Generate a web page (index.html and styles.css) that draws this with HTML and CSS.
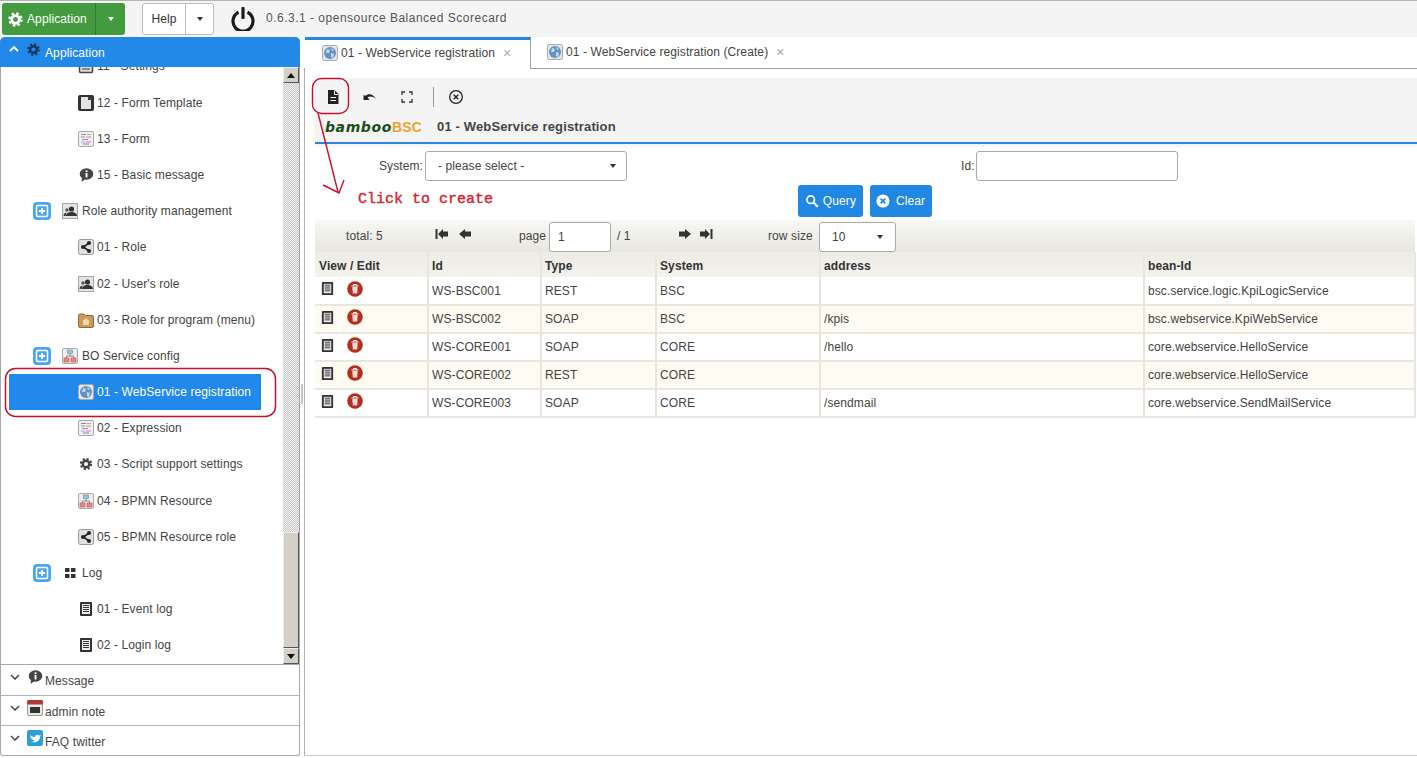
FILE: index.html
```html
<!DOCTYPE html>
<html lang="en">
<head>
<meta charset="utf-8">
<title>bambooBSC</title>
<link rel="stylesheet" href="styles.css">
</head>
<body>
<svg class="defs" width="0" height="0" aria-hidden="true">
  <symbol id="gear" viewBox="0 0 16 16"><circle cx="8" cy="8" r="4.1" fill="none" stroke="currentColor" stroke-width="3"/><circle cx="8" cy="8" r="6.4" fill="none" stroke="currentColor" stroke-width="2.6" stroke-dasharray="2.6 2.43"/></symbol>
  <symbol id="globe" viewBox="0 0 16 16"><rect x=".5" y=".5" width="15" height="15" rx="2" fill="#e6e6e6" stroke="#a9a9a9"/><circle cx="8" cy="8" r="6" fill="#5f93c9"/><path d="M5 4l3 1-1 3-3 0zM9 8l3 1-1 4-2-1zM9 3l3 2-2 1z" fill="#c9d9ea"/></symbol>
  <symbol id="share" viewBox="0 0 16 16"><rect x=".5" y=".5" width="15" height="15" rx="2" fill="#e0e0e0" stroke="#9a9a9a"/><path d="M11 4L5.5 8l5.5 4" fill="none" stroke="#222" stroke-width="1.6"/><circle cx="11" cy="4" r="2" fill="#222"/><circle cx="5" cy="8" r="2" fill="#222"/><circle cx="11" cy="12" r="2" fill="#222"/></symbol>
  <symbol id="users" viewBox="0 0 16 16"><rect x=".5" y=".5" width="15" height="15" fill="#e4e4e4" stroke="#a5a5a5"/><circle cx="9.5" cy="6" r="2.6" fill="#333"/><path d="M4 13c0-3 3-4 5.500-4S15 10 15 13zM1.500 13c0-2 1-3 3-3.500l-1 3.500z" fill="#333"/><circle cx="5" cy="7" r="1.700" fill="#555"/></symbol>
  <symbol id="folder" viewBox="0 0 16 16"><path d="M.5 3.500A1.500 1.500 0 0 1 2 2h4l1.500 1.500H14a1.500 1.500 0 0 1 1.500 1.500v9A1.500 1.500 0 0 1 14 15.500H2A1.500 1.500 0 0 1 .5 14z" fill="#c99a5b" stroke="#8f6a36"/><path d="M8 6l4 3.500h-1V13H5V9.500H4z" fill="#f0d9a8"/></symbol>
  <symbol id="tmpl" viewBox="0 0 16 16"><rect width="16" height="16" rx="2" fill="#333"/><path d="M3 2h7l3 3v9H3z" fill="#e4e4e4"/><path d="M10 2l3 3h-3z" fill="#333"/></symbol>
  <symbol id="form" viewBox="0 0 16 16"><rect x=".5" y=".5" width="15" height="15" rx="1.500" fill="#f3eef0" stroke="#a9a9a9"/><path d="M3 3.500h5" stroke="#6e8fc7"/><path d="M9 3.500h4" stroke="#d9a45c"/><path d="M3 6h4" stroke="#d77"/><path d="M8 6h5" stroke="#7b7"/><path d="M4 8.500h6" stroke="#b7c"/><path d="M3 11h4" stroke="#7bc"/><path d="M8 11h5" stroke="#d7a"/><path d="M5 13h6" stroke="#97c"/></symbol>
  <symbol id="msg" viewBox="0 0 16 16"><ellipse cx="8.500" cy="7" rx="6.800" ry="5.800" fill="#444"/><path d="M4 11l-.5 4 4-3z" fill="#444"/><rect x="7.600" y="6" width="1.900" height="4.500" fill="#fff"/><rect x="7.600" y="3.300" width="1.900" height="1.800" fill="#fff"/></symbol>
  <symbol id="tree" viewBox="0 0 16 16"><rect x=".5" y=".5" width="15" height="15" rx="1.500" fill="#eeeeee" stroke="#aaa"/><rect x="5.500" y="2" width="5" height="3.500" fill="#9bc0dc" stroke="#6a8da8" stroke-width=".6"/><path d="M8 5.500V8M4.500 10V8h7v2" fill="none" stroke="#888"/><rect x="2" y="10" width="5" height="4" fill="#e58a8a" stroke="#b55" stroke-width=".6"/><rect x="9" y="10" width="5" height="4" fill="#e58a8a" stroke="#b55" stroke-width=".6"/></symbol>
  <symbol id="list" viewBox="0 0 16 16"><rect x="2" y="1" width="12" height="14" rx="1" fill="#333"/><rect x="4" y="3" width="8" height="10" fill="#eee"/><path d="M5 4.500h6M5 6.500h6M5 8.500h6M5 10.500h6" stroke="#333"/></symbol>
  <symbol id="settings" viewBox="0 0 16 16"><rect x="1.500" y="1.500" width="13" height="13" rx="1" fill="#ddd" stroke="#444" stroke-width="1.500"/><path d="M4 5h8M4 8h8M4 11h8" stroke="#333"/></symbol>
  <symbol id="grid4" viewBox="0 0 16 16"><rect x="3" y="3" width="4.500" height="4" fill="#333"/><rect x="9" y="3" width="4.500" height="4" fill="#333"/><rect x="3" y="9" width="4.500" height="4" fill="#333"/><rect x="9" y="9" width="4.500" height="4" fill="#333"/></symbol>
  <symbol id="plus" viewBox="0 0 18 18"><rect width="18" height="18" rx="4" fill="#4ba6ee"/><rect x="3.500" y="3.500" width="11" height="11" rx="1.500" fill="none" stroke="#fff" stroke-width="1.500"/><path d="M9 6v6M6 9h6" stroke="#fff" stroke-width="2"/></symbol>
  <symbol id="trash" viewBox="0 0 16 16"><circle cx="8" cy="8" r="7.800" fill="#b5301c"/><path d="M4.500 5h7M6.500 5V3.500h3V5" fill="none" stroke="#fff"/><path d="M5.300 6h5.400l-.5 6.500H5.800z" fill="#f4d9d3"/></symbol>
</svg>

<div class="app">
  <header class="top">
    <div class="btn-split green">
      <span class="btn-main"><svg class="ico-15"><use href="#gear"/></svg>Application</span>
      <span class="btn-drop"><i class="caret white"></i></span>
    </div>
    <div class="btn-split plain">
      <span class="btn-main">Help</span>
      <span class="btn-drop"><i class="caret"></i></span>
    </div>
    <svg class="power" viewBox="0 0 24 24"><path d="M7.500 5.200a10 10 0 1 0 9 0" fill="none" stroke="#1a1a1a" stroke-width="3.200"/><rect x="10.400" y="0" width="3.200" height="12" rx="1" fill="#1a1a1a"/></svg>
    <span class="version">0.6.3.1 - opensource Balanced Scorecard</span>
  </header>

  <div class="body-row">
    <aside class="side">
      <div class="side-head">
        <svg class="chev" viewBox="0 0 10 6"><path d="M1 5l4-4 4 4" fill="none" stroke="#fff" stroke-width="1.800"/></svg>
        <svg class="head-ico navy"><use href="#gear"/></svg>
        <span class="head-label">Application</span>
      </div>
      <div class="tree-wrap">
        <ul class="tree">
          <li class="leaf"><svg class="ico"><use href="#settings"/></svg>11 - Settings</li>
          <li class="leaf"><svg class="ico"><use href="#tmpl"/></svg>12 - Form Template</li>
          <li class="leaf"><svg class="ico"><use href="#form"/></svg>13 - Form</li>
          <li class="leaf"><svg class="ico"><use href="#msg"/></svg>15 - Basic message</li>
          <li class="group"><svg class="plus"><use href="#plus"/></svg><svg class="ico"><use href="#users"/></svg>Role authority management</li>
          <li class="leaf"><svg class="ico"><use href="#share"/></svg>01 - Role</li>
          <li class="leaf"><svg class="ico"><use href="#users"/></svg>02 - User's role</li>
          <li class="leaf"><svg class="ico"><use href="#folder"/></svg>03 - Role for program (menu)</li>
          <li class="group"><svg class="plus"><use href="#plus"/></svg><svg class="ico"><use href="#tree"/></svg>BO Service config</li>
          <li class="leaf selected"><svg class="ico"><use href="#globe"/></svg>01 - WebService registration</li>
          <li class="leaf"><svg class="ico"><use href="#form"/></svg>02 - Expression</li>
          <li class="leaf"><svg class="ico dark"><use href="#gear"/></svg>03 - Script support settings</li>
          <li class="leaf"><svg class="ico"><use href="#tree"/></svg>04 - BPMN Resource</li>
          <li class="leaf"><svg class="ico"><use href="#share"/></svg>05 - BPMN Resource role</li>
          <li class="group"><svg class="plus"><use href="#plus"/></svg><svg class="ico"><use href="#grid4"/></svg>Log</li>
          <li class="leaf"><svg class="ico"><use href="#list"/></svg>01 - Event log</li>
          <li class="leaf"><svg class="ico"><use href="#list"/></svg>02 - Login log</li>
        </ul>
        <div class="vscroll">
          <span class="sb-btn"><i class="tri-up"></i></span>
          <span class="sb-track"></span>
          <span class="sb-thumb"></span>
          <span class="sb-btn"><i class="tri-down"></i></span>
        </div>
      </div>
      <div class="acc">
        <svg class="chev" viewBox="0 0 10 6"><path d="M1 1l4 4 4-4" fill="none" stroke="#444" stroke-width="1.500"/></svg>
        <svg class="acc-ico"><use href="#msg"/></svg><span class="acc-label">Message</span>
      </div>
      <div class="acc">
        <svg class="chev" viewBox="0 0 10 6"><path d="M1 1l4 4 4-4" fill="none" stroke="#444" stroke-width="1.500"/></svg>
        <svg class="acc-ico" viewBox="0 0 16 16"><rect x=".5" y=".5" width="15" height="15" rx="1.500" fill="#e8e8e8" stroke="#999"/><rect width="16" height="4.500" rx="1.500" fill="#b23a36"/><rect x="3" y="7" width="10" height="6" fill="#333"/></svg><span class="acc-label">admin note</span>
      </div>
      <div class="acc">
        <svg class="chev" viewBox="0 0 10 6"><path d="M1 1l4 4 4-4" fill="none" stroke="#444" stroke-width="1.500"/></svg>
        <svg class="acc-ico" viewBox="0 0 16 16"><rect width="16" height="16" rx="2" fill="#2b9fd9"/><path d="M3 5c2 1.500 3.500 2 5 2 0-2.500 3-3 4.200-1.500L14 5l-1 1.700c0 4-3.500 6.500-9.500 5.300 1.800 0 3-.5 4-1.500C5 10 3.500 8 3 5z" fill="#fff"/></svg><span class="acc-label">FAQ twitter</span>
      </div>
    </aside>

    <div class="splitter"><span class="grip"></span></div>

    <main class="content">
      <nav class="tabs">
        <div class="tab active"><svg class="ico"><use href="#globe"/></svg><span>01 - WebService registration</span><b class="x">×</b></div>
        <div class="tab"><svg class="ico"><use href="#globe"/></svg><span>01 - WebService registration (Create)</span><b class="x">×</b></div>
      </nav>
      <section class="panel">
        <div class="toolbar">
          <div class="tools">
            <svg class="tool" viewBox="0 0 16 16"><path d="M3 1h6.500L13.500 5v10H3z" fill="#222"/><path d="M9.500 1.500v4h3.500" fill="none" stroke="#f4f4f4"/><path d="M5.500 8.500h5.500M5.500 11.500h5.500" stroke="#fff" stroke-width="1.200"/></svg>
            <svg class="tool" viewBox="0 0 16 16"><path d="M3 7c4-3 8-2 11 3-3-2.500-6-3-8.500-1.700L7.500 11H1.500V5.500z" fill="#222"/></svg>
            <svg class="tool" viewBox="0 0 16 16"><path d="M3 6V3h3M10 3h3v3M13 10v3h-3M6 13H3v-3" fill="none" stroke="#333" stroke-width="1.300"/></svg>
            <span class="tool-sep"></span>
            <svg class="tool" viewBox="0 0 16 16"><circle cx="8" cy="8" r="6.300" fill="none" stroke="#222" stroke-width="1.300"/><path d="M5.700 5.700l4.600 4.600M10.300 5.700l-4.600 4.600" stroke="#222" stroke-width="1.400"/></svg>
          </div>
          <div class="titlebar">
            <span class="logo"><em>bamboo</em><strong>BSC</strong></span>
            <span class="title">01 - WebService registration</span>
          </div>
        </div>

        <form class="query">
          <div class="field f-system"><label>System:</label><span class="select wide">- please select -<i class="caret"></i></span></div>
          <div class="field f-id"><label>Id:</label><span class="input wide"></span></div>
        </form>
        <div class="actions">
          <span class="btn-blue"><svg class="ico-14" viewBox="0 0 16 16"><circle cx="6.500" cy="6.500" r="4.300" fill="none" stroke="#fff" stroke-width="2"/><path d="M10 10l4.500 4.500" stroke="#fff" stroke-width="2.400"/></svg>Query</span>
          <span class="btn-blue clear"><svg class="ico-14" viewBox="0 0 16 16"><circle cx="8" cy="8" r="7.500" fill="#fff"/><path d="M5.300 5.300l5.400 5.400M10.700 5.300l-5.400 5.400" stroke="#2189e0" stroke-width="2"/></svg>Clear</span>
        </div>

        <div class="pager">
          <span class="p-total">total: 5</span>
          <span class="p-nav n-first">
            <svg class="nav" viewBox="0 0 14 10"><path d="M1.500 0v10" stroke="#333" stroke-width="2"/><path d="M3 5l5-5v2.500h5v5H8V10z" fill="#333"/></svg>
            <svg class="nav" viewBox="0 0 14 10"><path d="M1 5l6-5v2.500h6v5H7V10z" fill="#333"/></svg>
          </span>
          <span class="p-page">page</span>
          <span class="input small">1</span>
          <span class="p-of">/ 1</span>
          <span class="p-nav n-last">
            <svg class="nav" viewBox="0 0 14 10"><path d="M13 5L7 0v2.500H1v5h6V10z" fill="#333"/></svg>
            <svg class="nav" viewBox="0 0 14 10"><path d="M12.500 0v10" stroke="#333" stroke-width="2"/><path d="M11 5L6 0v2.500H1v5h5V10z" fill="#333"/></svg>
          </span>
          <span class="p-size">row size</span>
          <span class="select size">10<i class="caret"></i></span>
        </div>

        <table class="grid">
          <colgroup><col class="c1"><col class="c2"><col class="c3"><col class="c4"><col class="c5"><col class="c6"></colgroup>
          <thead><tr><th>View / Edit</th><th>Id</th><th>Type</th><th>System</th><th>address</th><th>bean-Id</th></tr></thead>
          <tbody>
            <tr><td class="ops"><svg class="op"><use href="#list"/></svg><svg class="op"><use href="#trash"/></svg></td><td>WS-BSC001</td><td>REST</td><td>BSC</td><td></td><td>bsc.service.logic.KpiLogicService</td></tr>
            <tr class="alt"><td class="ops"><svg class="op"><use href="#list"/></svg><svg class="op"><use href="#trash"/></svg></td><td>WS-BSC002</td><td>SOAP</td><td>BSC</td><td>/kpis</td><td>bsc.webservice.KpiWebService</td></tr>
            <tr><td class="ops"><svg class="op"><use href="#list"/></svg><svg class="op"><use href="#trash"/></svg></td><td>WS-CORE001</td><td>SOAP</td><td>CORE</td><td>/hello</td><td>core.webservice.HelloService</td></tr>
            <tr class="alt"><td class="ops"><svg class="op"><use href="#list"/></svg><svg class="op"><use href="#trash"/></svg></td><td>WS-CORE002</td><td>REST</td><td>CORE</td><td></td><td>core.webservice.HelloService</td></tr>
            <tr><td class="ops"><svg class="op"><use href="#list"/></svg><svg class="op"><use href="#trash"/></svg></td><td>WS-CORE003</td><td>SOAP</td><td>CORE</td><td>/sendmail</td><td>core.webservice.SendMailService</td></tr>
          </tbody>
        </table>
      </section>
    </main>
  </div>
</div>

<svg class="marks" width="1417" height="758" viewBox="0 0 1417 758" aria-hidden="true">
  <rect x="5.500" y="368.500" width="270" height="48" rx="10" fill="none" stroke="#c8102e" stroke-width="1.500"/>
  <rect x="312.500" y="78.500" width="36" height="35" rx="9" fill="none" stroke="#c8102e" stroke-width="1.400"/>
  <path d="M318 113L338 192M323 185L339 193L344 180" fill="none" stroke="#c8102e" stroke-width="1.400"/>
</svg>
<span class="note">Click to create</span>
</body>
</html>
```

FILE: styles.css
```css
* { box-sizing: border-box; }
html, body { margin: 0; height: 758px; overflow: hidden; background: #fff; }
body { font-family: "Liberation Sans", Arial, sans-serif; font-size: 12px; letter-spacing: .1px; color: #444; position: relative; }
.defs { position: absolute; }
ul { margin: 0; padding: 0; list-style: none; }

.app { display: flex; flex-direction: column; height: 758px; }

/* top bar */
.top { height: 37px; flex: none; display: flex; align-items: center; background: #f4f4f4; border-top: 1px solid #b5b5b5; padding: 0 0 0 2px; }
.btn-split { display: flex; height: 32px; border-radius: 3px; font-size: 12px; }
.btn-main, .btn-drop { display: flex; align-items: center; justify-content: center; }
.green { width: 123px; background: #439a3f; color: #fff; }
.green .btn-main { width: 94px; gap: 4px; justify-content: flex-start; padding-left: 6px; border-right: 1px solid #2f7a2d; }
.green .btn-drop { flex: 1; }
.ico-15 { width: 15px; height: 15px; color: #fff; flex: none; }
.plain { width: 72px; margin-left: 17px; background: #fff; border: 1px solid #bdbdbd; color: #333; }
.plain .btn-main { width: 43px; border-right: 1px solid #bdbdbd; }
.plain .btn-drop { flex: 1; }
.caret { display: inline-block; width: 0; height: 0; border: 3.500px solid transparent; border-top: 4px solid #333; border-bottom: 0; }
.caret.white { border-top-color: #fff; }
.power { width: 24px; height: 24px; margin-left: 17px; flex: none; }
.version { margin: 0 0 2px 11px; letter-spacing: .5px; color: #555; }

.body-row { flex: 1; display: flex; min-height: 0; }

/* sidebar */
.side { width: 300px; flex: none; height: 719px; display: flex; flex-direction: column; border: 1px solid #a8a8a8; border-top: 0; border-radius: 5px 5px 3px 3px; background: #fff; }
.side-head { height: 30px; flex: none; margin: 0 -1px; background: #2289e8; color: #fff; display: flex; align-items: flex-start; border-radius: 5px 5px 0 0; position: relative; z-index: 1; }
.chev { width: 10px; height: 6px; flex: none; margin: 9px 0 0 9px; }
.head-ico { width: 13px; height: 13px; flex: none; margin: 6px 0 0 8px; }
.ico-14 { width: 14px; height: 14px; flex: none; }
.navy { color: #123a5e; }
.head-label { margin: 9px 0 0 5px; line-height: 14px; }

.tree-wrap { height: 598px; flex: none; display: flex; overflow: hidden; border-bottom: 1px solid #a8a8a8; }
.tree { flex: 1; margin-top: -18.7px; padding-left: 8px; }
.tree li { height: 36.19px; width: 252px; display: flex; align-items: center; white-space: nowrap; color: #444; }
.leaf { padding-left: 69px; }
.group { padding-left: 24px; }
.ico { width: 16px; height: 16px; flex: none; margin-right: 3px; }
.ico.dark { color: #444; transform: scale(.8); }
.plus { width: 18px; height: 18px; flex: none; margin-right: 12px; }
.group .ico { margin-right: 4px; }
.group .plus + .ico { margin-left: -1px; }
.tree .selected { background: #2189ec; color: #fff; }

.vscroll { width: 16px; flex: none; display: flex; flex-direction: column; background: #ddd; }
.sb-btn { height: 16px; flex: none; background: #d4d0c8; border: 1px solid; border-color: #eee #555 #555 #eee; display: flex; align-items: center; justify-content: center; }
.tri-up, .tri-down { width: 0; height: 0; border: 4px solid transparent; }
.tri-up { border-top: 0; border-bottom: 5px solid #111; }
.tri-down { border-bottom: 0; border-top: 5px solid #111; }
.sb-track { height: 449px; flex: none; background: repeating-conic-gradient(#c8c8c8 0 25%, #f0f0f0 0 50%) 0 0 / 2px 2px; }
.sb-thumb { flex: 1; background: #d4d0c8; border: 1px solid; border-color: #eee #555 #555 #eee; }

.acc { height: 30.500px; flex: none; display: flex; align-items: flex-start; border-bottom: 1px solid #b5b5b5; }
.acc:last-child { border-bottom: 0; }
.acc-ico { width: 16px; height: 16px; flex: none; margin: 4px 0 0 7px; }
.acc-label { margin: 9px 0 0 2px; line-height: 14px; color: #444; }

.splitter { width: 4px; flex: none; display: flex; align-items: center; }
.grip { width: 2px; height: 20px; margin: -7px 0 0 1px; background: #c4c4c4; }

/* content */
.content { flex: 1; min-width: 0; display: flex; flex-direction: column; height: 719px; border-bottom: 1px solid #ccc; }
.tabs { height: 32px; flex: none; display: flex; border-bottom: 1px solid #a0a0a0; padding-left: 1px; }
.tab { display: flex; align-items: center; height: 30px; padding: 0 0 0 17px; width: 242px; white-space: nowrap; color: #444; }
.tab.active { width: 226px; height: 32px; background: #fff; border-top: 3px solid #2b87dc; border-right: 1px solid #a0a0a0; padding-bottom: 3px; }
.tab + .tab { width: 265px; padding-left: 16px; }
.tab .ico { margin-right: 3px; }
.x { font-weight: normal; font-size: 14px; color: #aaa; margin-left: 8px; }

.panel { flex: 1; min-height: 0; border-left: 1px solid #b0b0b0; padding: 9px 2px 0 10px; }
.toolbar { height: 66px; margin-right: -2px; background: #f4f4f4; border-bottom: 2px solid #2b87dc; box-shadow: 0 3px 3px #f4f4f4; }
.tools { height: 38px; display: flex; align-items: center; padding-left: 10px; }
.tool { width: 16px; height: 16px; flex: none; margin-right: 21px; }
.tool-sep { width: 1px; height: 20px; background: #999; margin: 0 14px 0 -3px; }
.titlebar { display: flex; align-items: center; height: 21px; padding-left: 10px; }
.logo { font-size: 15px; font-weight: bold; width: 112px; letter-spacing: .6px; white-space: nowrap; }
.logo em { color: #1d4d1d; font-family: "DejaVu Sans", sans-serif; font-size: 14px; }
.logo strong { color: #f0a32c; font-size: 14px; letter-spacing: .2px; }
.title { font-weight: bold; font-size: 13px; color: #444; letter-spacing: .15px; }

.query { display: flex; margin-top: 7px; height: 30px; }
.field { display: flex; align-items: center; }
.f-system { width: 646px; }
.f-system label { width: 108px; text-align: right; }
label { margin-right: 2px; color: #444; }
.f-id label { margin-right: 1px; }
.select, .input { display: flex; align-items: center; height: 30px; background: #fff; border: 1px solid #aaa; border-radius: 3px; color: #444; }
.wide { width: 202px; }
.select.wide { padding: 0 10px 0 12px; justify-content: space-between; }

.actions { display: flex; justify-content: center; gap: 7px; margin-top: 4px; height: 32px; }
.btn-blue { display: flex; align-items: center; gap: 4px; padding: 0 7px; background: #2087e2; border-radius: 3px; color: #fff; white-space: nowrap; }
.btn-blue.clear { gap: 6px; padding: 0 7px 0 6px; }

.pager { display: flex; align-items: flex-start; height: 32px; margin-top: 3px; padding-top: 2px; background: linear-gradient(#f8f8f4, #e7e6df); line-height: 28px; }
.p-total { margin-left: 31px; width: 89px; }
.p-nav { display: flex; gap: 9px; height: 24px; align-items: center; }
.nav { width: 14px; height: 10px; flex: none; }
.n-first { width: 84px; }
.p-page { width: 30px; }
.input.small { width: 62px; padding-left: 8px; }
.p-of { margin-left: 6px; width: 61px; }
.n-last { gap: 7px; width: 90px; }
.p-size { width: 51px; }
.select.size { width: 77px; padding: 0 12px; justify-content: space-between; }

.grid { width: 1100px; table-layout: fixed; border-collapse: collapse; }
.c1 { width: 113px; } .c2 { width: 113px; } .c3 { width: 115px; } .c4 { width: 164px; } .c5 { width: 324px; } .c6 { width: 271px; }
.grid th { height: 25px; text-align: left; font-weight: bold; color: #333; padding: 2px 3px 0; background: linear-gradient(#ecebe4, #f3f2ec); border-right: 2px solid #e8e6dd; }
.grid th:first-child { padding-left: 4px; }
.grid td { height: 28px; padding: 0 3px; border-right: 2px solid #e8e6dd; border-bottom: 2px solid #e8e6dd; color: #444; white-space: nowrap; }
.grid .alt td { background: #fdfbf2; }
.grid td.ops { padding: 0 0 4px 5px; }
.op { width: 15px; height: 15px; vertical-align: middle; }
.op + .op { margin-left: 12px; width: 16px; height: 16px; }

/* annotations drawn on top of the screenshot */
.marks { position: absolute; left: 0; top: 0; pointer-events: none; }
.note { position: absolute; left: 358px; top: 191px; font: 15px/18px "Liberation Mono", monospace; -webkit-text-stroke: .4px #d9232e; letter-spacing: 0; color: #d9232e; white-space: nowrap; }
```
